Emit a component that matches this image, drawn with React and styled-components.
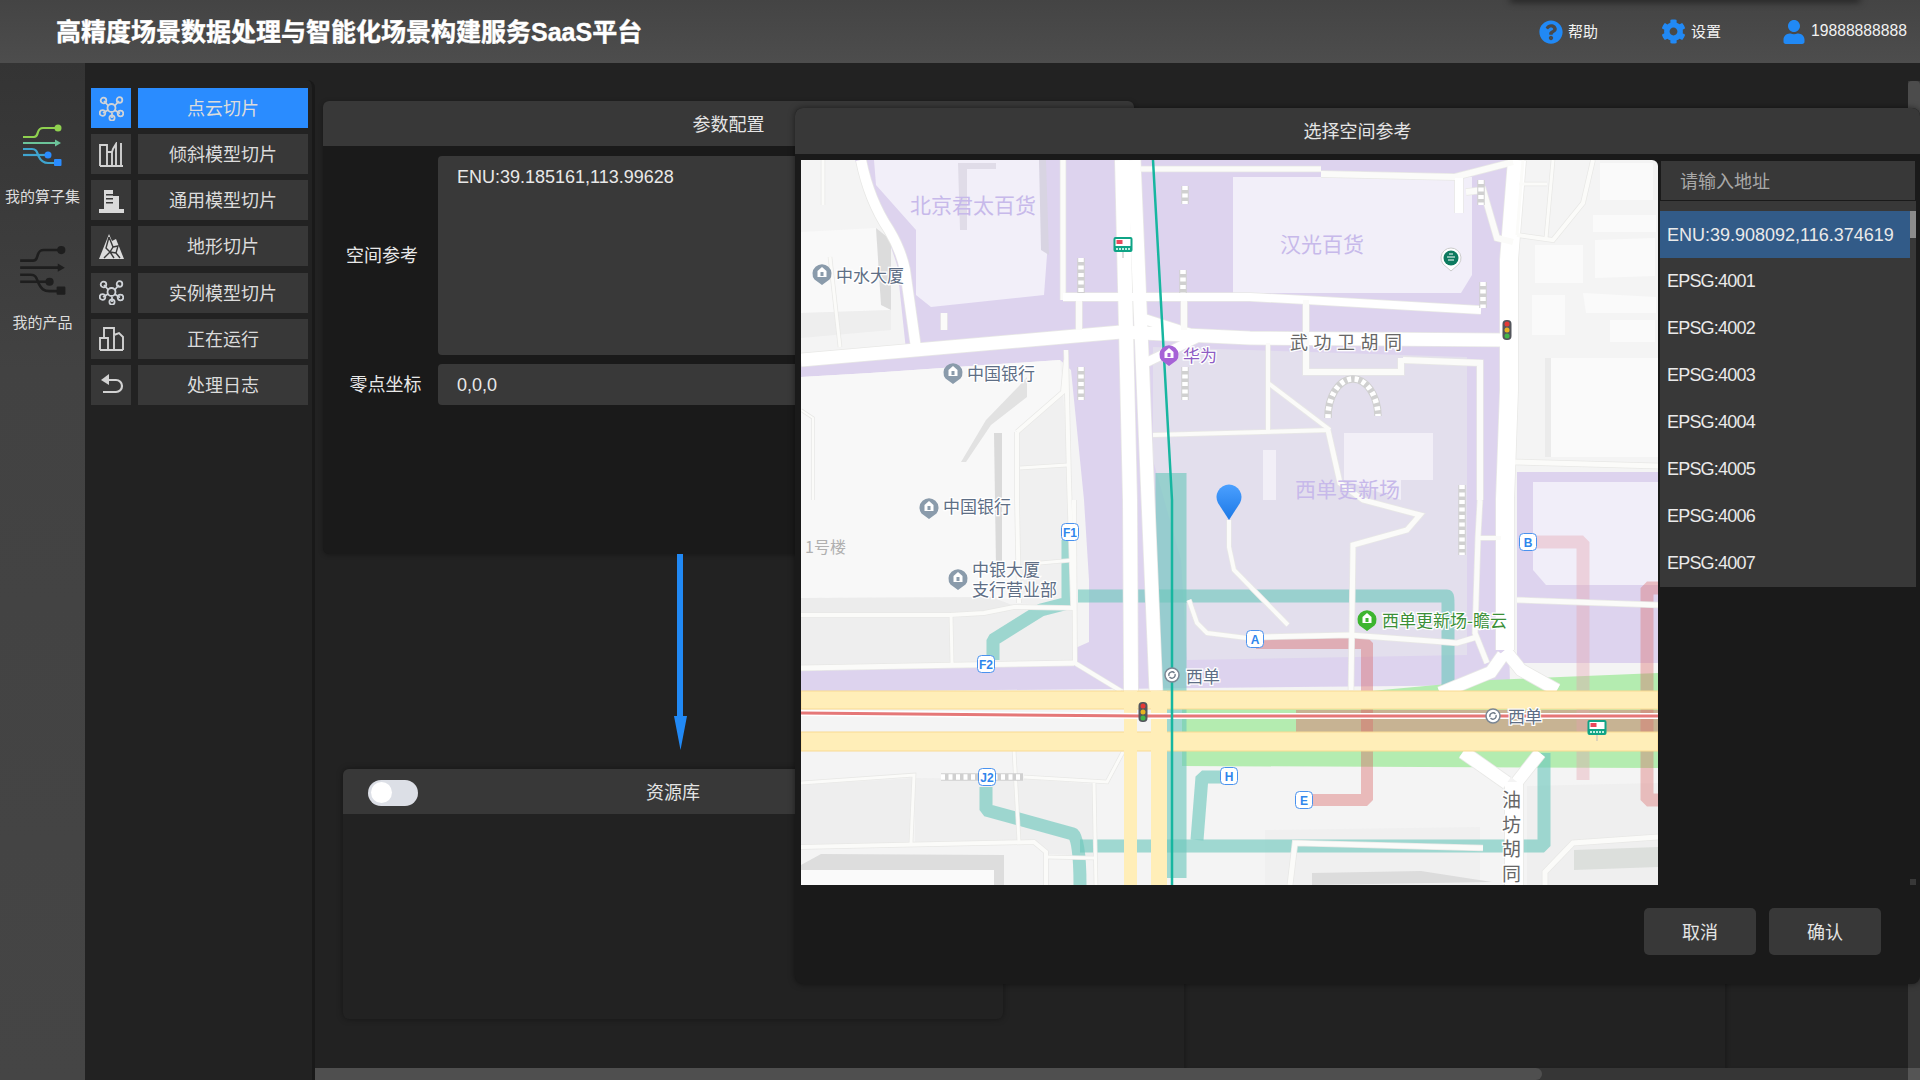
import React from 'react'
import styled, { createGlobalStyle } from 'styled-components'
import { FaQuestionCircle, FaCog, FaUser } from 'react-icons/fa'

const GlobalStyle = createGlobalStyle`
  html, body { margin: 0; padding: 0; background: #222; }
  * { box-sizing: border-box; }
  body { font-family: "Liberation Sans", "Noto Sans CJK SC", sans-serif; color: #e4e4e4; }
`

const Page = styled.div`
  position: relative;
  width: 1920px;
  height: 1080px;
  overflow: hidden;
  display: flex;
  flex-direction: column;
  background: #222;
`

/* top bar */
const Header = styled.header`
  position: relative;
  height: 63px;
  flex: none;
  display: flex;
  align-items: center;
  padding-left: 56px;
  background: linear-gradient(180deg, #444 0%, #4d4d4d 100%);
`
const HeaderShade = styled.div`
  position: absolute;
  top: -6px;
  left: 1510px;
  width: 350px;
  height: 6px;
  box-shadow: 0 2px 7px rgba(0, 0, 0, 0.55);
`
const Title = styled.h1`
  margin: 0;
  flex: 1;
  padding-bottom: 4px;
  font-size: 25px;
  font-weight: 700;
  color: #fff;
  -webkit-text-stroke: 0.4px #fff;
`
const HeaderItem = styled.div`
  display: flex;
  align-items: center;
  gap: 5px;
  width: ${p => p.$width}px;
  font-size: 15px;
  color: #f2f2f2;
  svg { color: #2189f5; flex: none; }
`
const HeaderText = styled.span`
  padding-bottom: 2px;
  font-size: ${p => p.$size || 15}px;
`

/* below the bar */
const Body = styled.div`
  flex: 1;
  display: flex;
  min-height: 0;
`
const Rail = styled.nav`
  width: 85px;
  flex: none;
  display: flex;
  flex-direction: column;
  align-items: center;
  padding-top: 61px;
  background: linear-gradient(180deg, #343434 0%, #424242 30%, #454545 100%);
`
const RailItem = styled.div`
  display: flex;
  flex-direction: column;
  align-items: center;
  gap: ${p => p.$gap}px;
  height: 121px;
  font-size: 15px;
  color: #ddd;
`
const Menu = styled.div`
  width: 230px;
  flex: none;
  position: relative;
  border-right: 3px solid #191919;
  border-top-right-radius: 8px;
  margin-top: 17px;
  padding: 8px 0 0 6px;
  display: flex;
  flex-direction: column;
  gap: 6.16px;
`
const MenuRow = styled.div`
  display: flex;
  gap: 7px;
  height: 40px;
`
const MenuIcon = styled.div`
  width: 40px;
  display: flex;
  align-items: center;
  justify-content: center;
  background: ${p => (p.$active ? '#2a8cff' : '#383838')};
  svg { width: 25px; height: 25px; }
`
const MenuLabel = styled.div`
  width: 170px;
  padding-bottom: 2px;
  display: flex;
  align-items: center;
  justify-content: center;
  font-size: 18px;
  color: #dcdcdc;
  background: ${p => (p.$active ? '#2a8cff' : '#383838')};
`

/* work area */
const Workspace = styled.main`
  flex: 1;
  min-width: 0;
  display: flex;
  flex-direction: column;
`
const WorkRow = styled.div`
  flex: 1;
  min-height: 0;
  display: flex;
`
const Columns = styled.div`
  flex: 1;
  display: flex;
  min-width: 0;
`
const FirstColumn = styled.div`
  width: 869px;
  flex: none;
  padding: 38px 0 0 8px;
`
const SideColumn = styled.div`
  flex: ${p => p.$flex};
  margin-top: 200px;
  border-left: 1px solid #1c1c1c;
  box-shadow: inset 3px 0 4px -3px rgba(0, 0, 0, 0.35);
`
const Panel = styled.section`
  width: 811px;
  height: 453px;
  border-radius: 6px;
  overflow: hidden;
  background: #1a1a1a;
  box-shadow: 0 1px 5px rgba(0, 0, 0, 0.3);
`
const PanelHead = styled.div`
  height: 45px;
  padding-bottom: 2px;
  display: flex;
  align-items: center;
  justify-content: center;
  font-size: 18px;
  background: #383838;
`
const PanelBody = styled.div`
  padding-top: 10px;
  display: grid;
  grid-template-columns: 115px 1fr;
  row-gap: 9px;
`
const FieldLabel = styled.div`
  padding: 0 0 3px ${p => p.$nudge}px;
  display: flex;
  align-items: center;
  justify-content: center;
  font-size: 18px;
  color: #e8e8e8;
`
const FieldArea = styled.div`
  height: ${p => p.$height}px;
  margin-right: 20px;
  padding: 11px 19px 0;
  border-radius: 4px;
  font-size: 18px;
  color: #e8e8e8;
  background: #393939;
`
const ArrowBox = styled.div`
  height: 196px;
  padding-left: 350px;
  margin-bottom: 19px;
  svg { display: block; }
`
const LibraryPanel = styled.section`
  width: 660px;
  height: 250px;
  margin-left: 20px;
  border-radius: 6px;
  overflow: hidden;
  background: #222;
  box-shadow: 0 0 6px rgba(0, 0, 0, 0.4);
`
const LibraryHead = styled.div`
  position: relative;
  height: 45px;
  padding-bottom: 2px;
  display: flex;
  align-items: center;
  justify-content: center;
  font-size: 18px;
  background: #383838;
`
const Toggle = styled.div`
  position: absolute;
  left: 25px;
  top: 11px;
  width: 50px;
  height: 26px;
  border-radius: 13px;
  background: #dcdfe6;
  &::after {
    content: '';
    position: absolute;
    left: 3px;
    top: 2px;
    width: 21px;
    height: 21px;
    border-radius: 50%;
    background: #fff;
  }
`
const VScroll = styled.div`
  width: 12px;
  flex: none;
  margin-top: 18px;
  background: #383838;
`
const VThumb = styled.div`
  height: 200px;
  border-radius: 4px;
  background: #4c4c4c;
`
const HScroll = styled.div`
  height: 12px;
  flex: none;
  display: flex;
  background: #363636;
`
const HThumb = styled.div`
  width: 1227px;
  border-radius: 0 6px 6px 0;
  background: #4f4f4f;
`
const HCorner = styled.div`
  width: 12px;
  margin-left: auto;
  background: #555;
`

/* modal */
const Dialog = styled.div`
  position: absolute;
  left: 795px;
  top: 108px;
  right: 0;
  height: 876px;
  border-radius: 8px;
  overflow: hidden;
  display: flex;
  flex-direction: column;
  background: #1a1a1a;
  box-shadow: 0 0 6px rgba(0, 0, 0, 0.5);
`
const DialogHead = styled.div`
  height: 46px;
  flex: none;
  padding-bottom: 2px;
  display: flex;
  align-items: center;
  justify-content: center;
  font-size: 18px;
  background: #383838;
`
const DialogMain = styled.div`
  position: relative;
  display: flex;
  gap: 2px;
  padding: 6px 0 0 6px;
`
const MapFrame = styled.div`
  width: 857px;
  height: 725px;
  flex: none;
  svg { display: block; border-top-right-radius: 6px; }
`
const Picker = styled.div`
  width: 256px;
  flex: none;
  padding-top: 1px;
`
const SearchBox = styled.div`
  width: 254px;
  margin-left: 1px;
  height: 39px;
  padding: 0 0 2px 19px;
  display: flex;
  align-items: center;
  font-size: 18px;
  color: #a8a8a8;
  background: #383838;
`
const OptionList = styled.div`
  position: relative;
  margin-top: 1px;
  height: 386px;
  padding-top: 10px;
  overflow: hidden;
  background: #383838;
`
const Option = styled.div`
  width: 250px;
  height: 47px;
  padding: ${p => (p.$active ? 2 : 0)}px 0 0 7px;
  display: flex;
  align-items: center;
  font-size: 18px;
  letter-spacing: ${p => (p.$active ? 0 : -0.8)}px;
  color: #eaeaea;
  background: ${p => (p.$active ? '#325b88' : 'transparent')};
`
const ListThumb = styled.div`
  position: absolute;
  right: 0;
  top: 10px;
  width: 6px;
  height: 27px;
  background: #8c8c8c;
`
const ResizeDot = styled.div`
  position: absolute;
  left: 1115px;
  top: 725px;
  width: 6px;
  height: 6px;
  background: #383838;
`
const DialogFoot = styled.div`
  display: flex;
  justify-content: flex-end;
  gap: 13px;
  padding: 23px 39px 0 0;
`
const FootButton = styled.button`
  width: 112px;
  height: 47px;
  padding: 0 0 2px;
  border: 0;
  border-radius: 5px;
  font: inherit;
  font-size: 18px;
  color: #e4e4e4;
  background: #383838;
`

/* map text */
const MapText = styled.text`
  font-family: "Noto Sans CJK SC", "Liberation Sans", sans-serif;
  font-size: ${p => p.$size || 17}px;
  letter-spacing: ${p => p.$spacing || 0}px;
  fill: ${p => p.$color};
  stroke: ${p => (p.$halo ? '#fff' : 'none')};
  stroke-width: 2.5px;
  paint-order: stroke;
`
const TagText = styled.text`
  font-family: "Liberation Sans", sans-serif;
  font-size: 12px;
  font-weight: 700;
  text-anchor: middle;
  fill: #2f86ec;
`

const MoleculeIcon = () => (
  <svg viewBox="0 0 25 25" fill="none" stroke="#cfd3d8" strokeWidth="1.8">
    <path d="M5 5l4.5 5M20 5l-4.5 5M4 17l5-3M21 17.5l-5.500-3.500M13 22v-5" />
    <circle cx="12.500" cy="12" r="4" />
    <circle cx="4.500" cy="4.500" r="2.800" />
    <circle cx="20.500" cy="4" r="2.800" />
    <circle cx="3.500" cy="17" r="2.800" />
    <circle cx="21.500" cy="17.500" r="2.800" />
    <circle cx="13" cy="22" r="2.600" />
  </svg>
)
const FactoryIcon = () => (
  <svg viewBox="0 0 25 25" fill="none" stroke="#d2d2d2" strokeWidth="1.9">
    <path d="M1 24V3h7v21M8 10h5l1-3 3-5v22M13 10v14M22 1v23M1 24h23" />
  </svg>
)
const BuildingIcon = () => (
  <svg viewBox="0 0 25 25">
    <path fill="#dadada" d="M0 21h25v4H0zM5 2h9v6h6v13H5z" />
    <path fill="#383838" d="M7 6h7v1.500H7zM7 10h7v1.500H7zM7 14h7v1.500H7z" />
  </svg>
)
const PeakIcon = () => (
  <svg viewBox="0 0 25 25">
    <path fill="#dcdcdc" d="M10 0L13 7L17 5L25 25H0Z" />
    <path fill="none" stroke="#383838" strokeWidth="1.400" d="M10 3L7 14L11 18L5 24M10 3L14 13L11 18L15 24M14 13L19 12L17 19L21 24M17 19L11 18" />
  </svg>
)
const SkylineIcon = () => (
  <svg viewBox="0 0 25 25" fill="none" stroke="#d2d2d2" strokeWidth="1.900">
    <path d="M1 24V12h8v12M5 12V2h10v22M15 9l5-2 4 4v13M1 24h23" />
  </svg>
)
const BackIcon = () => (
  <svg viewBox="0 0 25 25" fill="none" stroke="#d2d2d2" strokeWidth="2.200">
    <path d="M5 8h12a6 6 0 0 1 0 12H4" />
    <path d="M10 2L2 8l8 5z" fill="#d2d2d2" stroke="none" />
  </svg>
)

const FlowIcon = ({ width, height, colors }) => (
  <svg width={width} height={height} viewBox="0 0 40 42" fill="none" strokeWidth="2.200">
    <path stroke={colors[0]} d="M1 13h11c3 0 3-2 4-5s2-4 5-4h15" />
    <circle cx="36" cy="4" r="3.500" fill={colors[0]} />
    <path stroke={colors[1]} d="M1 19h33" />
    <path fill={colors[1]} d="M33 15.500l6 3.500-6 3.500z" />
    <path stroke={colors[2]} d="M1 25h9c5 0 5 4 7 8s4 6 9 6h10" />
    <path stroke={colors[2]} d="M1 31h24" />
    <circle cx="26" cy="31" r="3.500" fill={colors[3]} />
    <rect x="32" y="35" width="7.500" height="7" rx="1" fill={colors[3]} />
  </svg>
)

const menuItems = [
  ['点云切片', MoleculeIcon, true],
  ['倾斜模型切片', FactoryIcon],
  ['通用模型切片', BuildingIcon],
  ['地形切片', PeakIcon],
  ['实例模型切片', MoleculeIcon],
  ['正在运行', SkylineIcon],
  ['处理日志', BackIcon],
]

const options = ['ENU:39.908092,116.374619', 'EPSG:4001', 'EPSG:4002', 'EPSG:4003', 'EPSG:4004', 'EPSG:4005', 'EPSG:4006', 'EPSG:4007']

/* map data, in map pixels */
const blocks = [
  ['#ddd3ee', '54,0 710,0 712,300 706,400 709,525 0,532 0,492 270,490 288,482 288,420 283,340 270,210 259,200 69,213 0,217 0,195 105,190 96,105 86,75 70,45'],
  ['#f8f8f8', '0,217 69,213 259,200 262,232 216,272 216,440 190,437 0,438'],
  ['#f0f0f0', '216,272 262,235 270,340 273,448 216,443'],
  ['#ececec', '0,438 190,437 214,446 180,454 0,456'],
  ['#eeeeee', '0,458 149,458 150,503 0,508'],
  ['#efefef', '152,458 214,450 272,451 273,500 153,503'],
  ['#eeeeee', '0,625 112,618 110,683 0,686'],
  ['#efefef', '114,618 223,619 293,624 293,696 246,694 233,680 114,683'],
  ['#f9f9f9', '0,72 75,68 90,80 90,150 0,153'],
  ['#dcdcdc', '75,68 90,80 90,150 80,145'],
  ['#eeeeee', '0,153 90,150 90,170 0,178'],
  ['#f2eff9', '73,0 242,0 246,95 243,135 130,147 115,135 115,70 75,25'],
  ['#e0dce8', '157,3 195,3 195,9 166,9 166,70 159,70'],
  ['#d8d4e2', '238,0 245,0 248,95 240,90'],
  ['#e3dfed', '352,187 666,197 666,495 386,500 380,400 352,300'],
  ['#f2eff9', '432,17 671,17 671,115 660,133 432,133'],
  ['#f2eff7', '543,273 632,273 632,320 600,320 600,340 543,320'],
  ['#f2eff7', '462,290 475,290 475,340 462,340'],
  ['#fafafa', '734,85 782,85 782,123 734,123'],
  ['#fafafa', '794,80 854,78 854,116 794,118'],
  ['#fafafa', '799,3 852,3 852,40 799,40'],
  ['#fafafa', '792,55 855,55 855,72 792,72'],
  ['#fafafa', '731,135 764,135 764,175 731,175'],
  ['#fafafa', '782,133 855,137 855,153 785,153'],
  ['#fafafa', '809,160 854,160 854,182 809,182'],
  ['#fafafa', '744,198 857,198 857,297 744,297'],
  ['#ebebeb', '744,198 750,198 750,297 744,297'],
  ['#ddd3ee', '716,312 857,312 857,503 716,503'],
  ['#f1eef9', '732,322 857,322 857,425 745,425 732,410'],
  ['#b4ecb0', '570,531 690,520 857,513 857,532 570,532'],
  ['#b4ecb0', '381,549 857,549 857,608 381,606'],
  ['#c7b393', '495,550 857,550 857,572 495,572'],
  ['#f0f0f0', '464,670 679,667 679,725 464,725'],
  ['#efefef', '726,626 857,623 857,725 726,725'],
  ['#dcdfdc', '773,690 857,687 857,707 773,710'],
  ['#dcdcdc', '511,713 620,711 691,722 511,725'],
  ['#dddddd', '0,705 20,694 203,695 203,725 193,725 193,710 0,710'],
  ['#fafafa', '0,710 193,710 193,725 0,725'],
  ['#e2e2e2', '226,217 226,237 190,265 165,302 160,302 185,260 218,226'],
  ['#dadada', '193,273 201,273 201,407 195,407'],
]

const tints = [
  ['#6dc8bd', 0.63, 31, 'M370 313V718'],
  ['#6dc8bd', 0.63, 13, 'M277 436H646Q647 436 647 444V530'],
  ['#6dc8bd', 0.63, 13, 'M267 380V443L240 450L192 480V500'],
  ['#6dc8bd', 0.63, 13, 'M185 627V650L272 674Q279 680 279 725'],
  ['#6dc8bd', 0.63, 13, 'M279 686H743V593'],
  ['#6dc8bd', 0.63, 13, 'M396 680L401 617H429'],
  ['#d96a6a', 0.42, 12, 'M455 483H566V640H505'],
  ['#e6a3ae', 0.38, 13, 'M727 382H782V620'],
  ['#d96a6a', 0.38, 13, 'M857 428H846V640H857'],
]

const roads = [
  ['M321 0L329 340L330 531', 14],
  ['M333 0L347 340L355 531', 13],
  ['M60 0Q68 40 88 70Q100 90 104 110L116 195', 10],
  ['M0 200L320 172L449 178L702 180', 13],
  ['M396 176L340 158', 10],
  ['M340 205L396 178', 9],
  ['M716 0L708 100L708 230L704 340L704 490', 18],
  ['M702 495L690 512L639 533', 12],
  ['M704 490L720 510L756 530', 12],
  ['M662 592L706 623', 13],
  ['M739 593L716 622', 12],
  ['M713 622V725', 18],
  ['M262 0V140', 5],
  ['M278 140V170', 6],
  ['M383 140V170', 6],
  ['M143 170V153', 6],
  ['M265 190L268 320L272 448', 4],
  ['M262 137H449L505 140L680 150', 8],
  ['M339 9H520', 5],
  ['M520 14L654 17L712 2', 6],
  ['M602 200L679 203V340', 6],
  ['M505 140V212H600V198', 6],
  ['M658 18V53', 8],
  ['M665 32L682 30L696 78L712 82', 6],
  ['M716 75L752 80L782 43L792 0', 4],
  ['M722 0L716 75', 3],
  ['M745 78L752 0', 3],
  ['M718 24L746 24', 3],
  ['M467 183V270', 4],
  ['M467 223L529 270', 4],
  ['M352 275L529 270', 4],
  ['M527 270L539 323L562 340L619 355L606 370L552 385L550 530', 5],
  ['M428 360V387L433 410L487 465', 4],
  ['M388 440L396 463L406 473L446 478', 4],
  ['M462 477L549 475L656 483L676 477', 5],
  ['M679 340L677 377L674 473L686 503', 5],
  ['M677 378H700', 4],
  ['M714 302L857 306', 5],
  ['M716 440L857 445', 5],
  ['M0 455H149L183 453L213 447L273 448', 4],
  ['M0 508L273 503', 5],
  ['M273 340L274 503L320 531', 4],
  ['M150 455L151 503', 3],
  ['M216 272V340L218 443', 4],
  ['M216 272L262 232L265 200', 4],
  ['M219 308L266 305', 3],
  ['M239 403L273 400', 3],
  ['M0 623L113 615L110 683', 3],
  ['M0 687L233 682L245 692V725', 4],
  ['M245 697L293 698', 3],
  ['M293 623L295 725', 3],
  ['M213 590L218 682', 3],
  ['M223 617L306 622L322 592', 3],
  ['M744 725V712L772 683L857 677', 5],
  ['M489 725L494 683L682 688', 5],
  ['M22 0V45', 3],
  ['M29 97L39 187', 3],
  ['M0 250L12 258V340', 2],
]

const crossWalks = [
  'M280 98V133', 'M382 110V133', 'M280 207V240', 'M384 207V240', 'M682 122V148',
  'M661 325V395', 'M680 20V45', 'M140 617H222', 'M384 26V44',
  'M527 258A25 38 0 0 1 577 256',
]

const poiPins = [
  [21, 113, '#8a9bab'], [152, 212, '#8a9bab'], [128, 347, '#8a9bab'], [157, 418, '#8a9bab'],
  [368, 194, '#a663d6'], [566, 459, '#3db52f'],
]
const doorTags = [
  ['F1', 269, 372], ['F2', 185, 504], ['J2', 186, 617], ['H', 428, 616],
  ['A', 454, 479], ['B', 727, 382], ['E', 503, 640],
]

const PoiPin = ({ x, y, color }) => (
  <g transform={`translate(${x} ${y})`}>
    <path fill={color} d="M0 12L-7.500 6.500A9.500 9.500 0 1 1 7.500 6.500Z" />
    <path fill="#fff" d="M-4.500 -2L0 -6L4.500 -2V4H-4.500Z" />
    <rect x="-1.500" y="-1" width="3" height="4" fill={color} />
  </g>
)
const TrafficLight = ({ x, y }) => (
  <g transform={`translate(${x} ${y})`}>
    <rect x="-4.500" y="-10" width="9" height="20" rx="4" fill="#54565c" />
    <circle cy="-6" r="2.500" fill="#e53935" />
    <circle r="2.500" fill="#e8b321" />
    <circle cy="6" r="2.500" fill="#43b649" />
  </g>
)
const Kiosk = ({ x, y }) => (
  <g transform={`translate(${x} ${y})`}>
    <path d="M0 7V13" stroke="#bbb" strokeWidth="1" />
    <rect x="-9.500" y="-8" width="19" height="15" rx="2" fill="#0fa486" />
    <rect x="-7.500" y="-6" width="15" height="7" fill="#fff" />
    <rect x="-6.500" y="-5" width="6" height="4" fill="#e8475a" />
    <path d="M-7 4H7" stroke="#bdeee0" strokeWidth="2" strokeDasharray="2 1" />
  </g>
)
const MetroDot = ({ x, y }) => (
  <g transform={`translate(${x} ${y})`}>
    <circle r="7" fill="#fff" stroke="#7b8794" strokeWidth="1.500" />
    <path d="M-3 1A3.200 3.200 0 0 1 2.500 -2M3 -1A3.200 3.200 0 0 1 -2.500 2" fill="none" stroke="#6b7785" strokeWidth="1.300" />
  </g>
)

const BaseMap = () => (
  <svg width="857" height="725" viewBox="0 0 857 725">
    <rect width="857" height="725" fill="#f4f4f4" />
    {blocks.map(([fill, points]) => <polygon key={points} fill={fill} points={points} />)}
    {tints.map(([stroke, opacity, width, d]) => (
      <path key={d} d={d} fill="none" stroke={stroke} strokeOpacity={opacity} strokeWidth={width} strokeLinejoin="bevel" />
    ))}
    {roads.map(([d, width]) => <path key={d + 'c'} d={d} fill="none" stroke="#e8e8e6" strokeWidth={width + 1.5} />)}
    {roads.map(([d, width]) => <path key={d} d={d} fill="none" stroke={width > 7 ? '#fff' : '#fbfbf9'} strokeWidth={width} />)}
    {crossWalks.map(d => <path key={d} d={d} fill="none" stroke="#d0d0d0" strokeWidth="7.500" />)}
    {crossWalks.map(d => <path key={d + 'w'} d={d} fill="none" stroke="#fff" strokeWidth="5.500" strokeDasharray="4 3.500" />)}

    <path fill="#ffeeb8" stroke="#f9da92" d="M0 531H857V549H0ZM0 572H857V591H0Z" />
    <path fill="#ffeeb8" d="M323 531H336V725H323ZM350 531H366V725H350Z" />
    <path d="M0 553L340 556H857" fill="none" stroke="#fff" strokeWidth="6" />
    <path d="M0 553L340 556H857" fill="none" stroke="#e57777" strokeWidth="3" />
    <path d="M352 0L371 340V725" fill="none" stroke="#17b6a0" strokeWidth="2.500" />

    <MapText x="109" y="53" $size="21" $color="#c7b9ea">北京君太百货</MapText>
    <MapText x="479" y="92" $size="21" $color="#c7b9ea">汉光百货</MapText>
    <MapText x="494" y="337" $size="21" $color="#c7b9ea">西单更新场</MapText>
    <MapText x="4" y="393" $size="16" $color="#b0b0b0">1号楼</MapText>
    <MapText x="35" y="122" $color="#5e6e85" $halo>中水大厦</MapText>
    <MapText x="166" y="220" $color="#5e6e85" $halo>中国银行</MapText>
    <MapText x="142" y="353" $color="#5e6e85" $halo>中国银行</MapText>
    <MapText x="171" y="416" $color="#5e6e85" $halo>中银大厦</MapText>
    <MapText x="171" y="436" $color="#5e6e85" $halo>支行营业部</MapText>
    <MapText x="382" y="202" $color="#8e5cc4" $halo>华为</MapText>
    <MapText x="385" y="523" $color="#5e6e85" $halo>西单</MapText>
    <MapText x="707" y="563" $color="#5e6e85" $halo>西单</MapText>
    <MapText x="581" y="467" $color="#3b8f38" $halo>西单更新场-瞻云</MapText>
    <MapText x="489" y="189" $size="18" $spacing="5.500" $color="#676767" $halo>武功卫胡同</MapText>
    {['油', '坊', '胡', '同'].map((c, i) => (
      <MapText key={c} x="701" y={647 + i * 24.500} $size="19" $color="#676767" $halo>{c}</MapText>
    ))}

    {poiPins.map(([x, y, color]) => <PoiPin key={`${x}-${y}`} x={x} y={y} color={color} />)}
    <g transform="translate(650 98)">
      <path fill="#fff" stroke="#ccc" d="M0 13L-8 6A10 10 0 1 1 8 6Z" />
      <circle r="7.500" fill="#0d7a5f" />
      <path d="M-4 -1H4M-3 2H3M-2 -4H2" stroke="#fff" strokeWidth="1" />
    </g>
    <TrafficLight x={706} y={170} />
    <TrafficLight x={342} y={552} />
    <Kiosk x={322} y={85} />
    <Kiosk x={796} y={568} />
    <MetroDot x={371} y={515} />
    <MetroDot x={692} y={556} />
    {doorTags.map(([t, x, y]) => (
      <g key={t}>
        <rect x={x - 8.500} y={y - 8.500} width="17" height="17" rx="4" fill="#fff" stroke="#4a92ee" />
        <TagText x={x} y={y + 4.500}>{t}</TagText>
      </g>
    ))}
    <defs>
      <linearGradient id="dropFill" x1="0" y1="0" x2="0" y2="1">
        <stop offset="0" stopColor="#4ba0ff" />
        <stop offset="1" stopColor="#1c78e6" />
      </linearGradient>
    </defs>
    <path fill="url(#dropFill)" d="M428 360L417 343A12.500 12.500 0 1 1 439 343Z" />
  </svg>
)

function App() {
  return (
    <Page>
      <GlobalStyle />
      <Header>
        <HeaderShade />
        <Title>高精度场景数据处理与智能化场景构建服务SaaS平台</Title>
        <HeaderItem $width={122}><FaQuestionCircle size={24} /><HeaderText>帮助</HeaderText></HeaderItem>
        <HeaderItem $width={121}><FaCog size={25} /><HeaderText>设置</HeaderText></HeaderItem>
        <HeaderItem $width={138}><FaUser size={24} /><HeaderText $size={15.7}>19888888888</HeaderText></HeaderItem>
      </Header>
      <Body>
        <Rail>
          <RailItem $gap={19}>
            <FlowIcon width={40} height={42} colors={['#8fd14f', '#6cc49a', '#3fa5d0', '#2a8cff']} />
            我的算子集
          </RailItem>
          <RailItem $gap={16}>
            <FlowIcon width={47} height={50} colors={['#1e1e1e', '#1e1e1e', '#1e1e1e', '#1e1e1e']} />
            我的产品
          </RailItem>
        </Rail>
        <Menu>
          {menuItems.map(([label, Icon, active]) => (
            <MenuRow key={label}>
              <MenuIcon $active={active}><Icon /></MenuIcon>
              <MenuLabel $active={active}>{label}</MenuLabel>
            </MenuRow>
          ))}
        </Menu>
        <Workspace>
          <WorkRow>
            <Columns>
              <FirstColumn>
                <Panel>
                  <PanelHead>参数配置</PanelHead>
                  <PanelBody>
                    <FieldLabel $nudge={3}>空间参考</FieldLabel>
                    <FieldArea $height={199}>ENU:39.185161,113.99628</FieldArea>
                    <FieldLabel $nudge={10}>零点坐标</FieldLabel>
                    <FieldArea $height={41}>0,0,0</FieldArea>
                  </PanelBody>
                </Panel>
                <ArrowBox>
                  <svg width="14" height="196" viewBox="0 0 14 196">
                    <path fill="#2189f5" d="M4 0H10V162H14L7.500 196L1 162H4Z" />
                  </svg>
                </ArrowBox>
                <LibraryPanel>
                  <LibraryHead>
                    <Toggle />
                    资源库
                  </LibraryHead>
                </LibraryPanel>
              </FirstColumn>
              <SideColumn $flex={540} />
              <SideColumn $flex={182} />
            </Columns>
            <VScroll><VThumb /></VScroll>
          </WorkRow>
          <HScroll>
            <HThumb />
            <HCorner />
          </HScroll>
        </Workspace>
      </Body>
      <Dialog>
        <DialogHead>选择空间参考</DialogHead>
        <DialogMain>
          <MapFrame><BaseMap /></MapFrame>
          <Picker>
            <SearchBox>请输入地址</SearchBox>
            <OptionList>
              {options.map((o, i) => <Option key={o} $active={i === 0}>{o}</Option>)}
              <ListThumb />
            </OptionList>
          </Picker>
          <ResizeDot />
        </DialogMain>
        <DialogFoot>
          <FootButton>取消</FootButton>
          <FootButton>确认</FootButton>
        </DialogFoot>
      </Dialog>
    </Page>
  )
}

export default App
